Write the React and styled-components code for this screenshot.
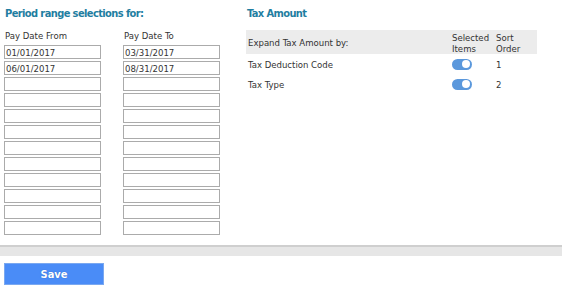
import React from "react";
import styled, { createGlobalStyle } from "styled-components";

const GlobalStyle = createGlobalStyle`
  html, body { margin: 0; padding: 0; background: #fff; }
  body { font-family: "DejaVu Sans Condensed", "DejaVu Sans", sans-serif; color: #333; }
`;

const Page = styled.div`
  width: 562px;
  height: 292px;
  display: flex;
  flex-direction: column;
  overflow: hidden;
`;

const Main = styled.div`
  display: flex;
  height: 245px;
`;

const LeftPanel = styled.section`
  width: 242px;
  padding-left: 4px;
  box-sizing: border-box;
`;

const RightPanel = styled.section`
  width: 291px;
  padding-left: 4px;
`;

const Heading = styled.h2`
  margin: 0;
  padding: 7px 0 0 1px;
  height: 23px;
  box-sizing: border-box;
  font-size: 11px;
  font-weight: bold;
  letter-spacing: -0.6px;
  color: #1f7ea1;
  line-height: 13px;
`;

const DateGrid = styled.div`
  display: grid;
  grid-template-columns: 97px 97px;
  column-gap: 22px;
  row-gap: 2px;
`;

const ColLabel = styled.div`
  font-size: 9.5px;
  line-height: 12px;
  padding: 7px 0 1px 1px;
  color: #333;
`;

const DateInput = styled.input`
  box-sizing: border-box;
  width: 97px;
  height: 14px;
  margin: 0;
  padding: 0 0 0 1px;
  border: 1px solid #ababab;
  font-family: inherit;
  font-size: 9.5px;
  line-height: 12px;
  color: #333;
  background: #fff;
  outline: none;
`;

const Table = styled.div`
  display: grid;
  grid-template-columns: 204px 44px 43px;
  margin-top: 7px;
  font-size: 9.5px;
  line-height: 11px;
`;

const HeaderCell = styled.div`
  background: #ececec;
  height: 24px;
  box-sizing: border-box;
  padding: ${(p) => (p.$single ? "7px 0 0 2px" : "2px 0 0 2px")};
`;

const Cell = styled.div`
  height: 20px;
  display: flex;
  align-items: center;
  padding-left: 2px;
`;

const Toggle = styled.span`
  width: 20px;
  height: 11px;
  border-radius: 6px;
  background: #5b98dc;
  position: relative;
  display: inline-block;
  &::after {
    content: "";
    position: absolute;
    right: 2px;
    top: 1.5px;
    width: 8px;
    height: 8px;
    border-radius: 50%;
    background: #fff;
  }
`;

const Divider = styled.div`
  height: 9px;
  border-top: 2px solid #cfcfcf;
  background: #e6e6e6;
`;

const Footer = styled.div`
  display: flex;
  padding: 7px 0 0 4px;
`;

const SaveButton = styled.button`
  width: 100px;
  height: 22px;
  box-sizing: border-box;
  border: 1px solid #7aa8f0;
  background: #4a8cf7;
  color: #fff;
  font-family: "DejaVu Sans Condensed", "DejaVu Sans", sans-serif;
  font-weight: bold;
  font-size: 11px;
  padding: 0;
  text-shadow: 0 0 1px #2c5fb8;
  cursor: pointer;
`;

const fromDates = ["01/01/2017", "06/01/2017", "", "", "", "", "", "", "", "", "", ""];
const toDates = ["03/31/2017", "08/31/2017", "", "", "", "", "", "", "", "", "", ""];

const rows = [
  { label: "Tax Deduction Code", order: 1 },
  { label: "Tax Type", order: 2 },
];

export default function App() {
  return (
    <Page>
      <GlobalStyle />
      <Main>
        <LeftPanel>
          <Heading>Period range selections for:</Heading>
          <DateGrid>
            <ColLabel>Pay Date From</ColLabel>
            <ColLabel>Pay Date To</ColLabel>
            {fromDates.map((d, i) => (
              <React.Fragment key={i}>
                <DateInput defaultValue={d} />
                <DateInput defaultValue={toDates[i]} />
              </React.Fragment>
            ))}
          </DateGrid>
        </LeftPanel>
        <RightPanel>
          <Heading>Tax Amount</Heading>
          <Table>
            <HeaderCell $single>Expand Tax Amount by:</HeaderCell>
            <HeaderCell>Selected<br />Items</HeaderCell>
            <HeaderCell>Sort<br />Order</HeaderCell>
            {rows.map((r) => (
              <React.Fragment key={r.label}>
                <Cell>{r.label}</Cell>
                <Cell><Toggle /></Cell>
                <Cell>{r.order}</Cell>
              </React.Fragment>
            ))}
          </Table>
        </RightPanel>
      </Main>
      <Divider />
      <Footer>
        <SaveButton>Save</SaveButton>
      </Footer>
    </Page>
  );
}
